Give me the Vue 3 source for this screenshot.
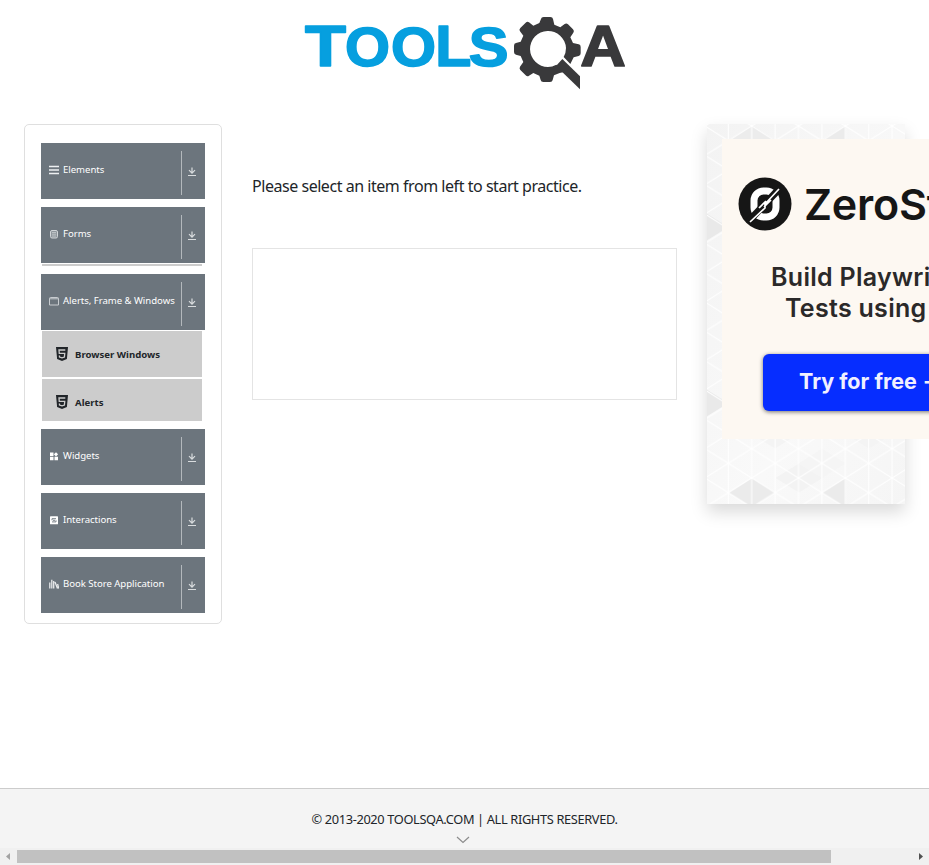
<script setup>
const groups = [
  { label: 'Elements', icon: 'menu' },
  { label: 'Forms', icon: 'form', strip: true },
  { label: 'Alerts, Frame & Windows', icon: 'window', children: ['Browser Windows', 'Alerts'] },
  { label: 'Widgets', icon: 'widgets' },
  { label: 'Interactions', icon: 'interact' },
  { label: 'Book Store Application', icon: 'books' }
]
const shades = [
  [45, 16, '#ececec'], [45, 368.7, '#ebebeb'], [-2, 103, '#e9e9e9'], [-2, 279, '#e9e9e9'],
  [92, 354, '#f3f3f3'], [115, 339.4, '#f5f5f5'], [68, 310, '#f4f4f4'], [162, 310, '#f4f4f4']
].map(([x, y, fill]) => ({ fill, points: `${x - 23.4},${y} ${x},${y - 14.6} ${x + 23.4},${y} ${x},${y + 14.6}` }))
</script>

<template>
  <div class="page">
    <header>
      <svg class="logo" viewBox="0 0 1020 270">
        <g class="tools">
          <text transform="translate(27 175) scale(1.17 .985)">T</text>
          <text transform="translate(147 175) scale(1.01 .97)">O</text>
          <text transform="translate(285 175) scale(1.01 .97)">O</text>
          <text transform="translate(418 175) scale(1.03 .985)">L</text>
          <text transform="translate(518 175) scale(1.04 .97)">S</text>
        </g>
        <g fill="#39393b">
          <path fill-rule="evenodd" d="M735 33q1-6 8-6h20q7 0 8 6l4 17 18 8 13-10q5-4 10 1l15 15q5 5 1 10l-9 14 8 17 17 4q6 1 6 8v19q0 7-6 8l-15 4-10 20-20-21q7-12 7-27a54 54 0 1 0-54 57q13 0 25-7l23 22-13 3-17 7-4 14q-1 6-8 6h-20q-7 0-8-6l-4-13-18-8-13 8q-5 4-10-1l-16-16q-4-5-1-10l10-14-8-18-14-4q-6-1-6-8v-19q0-7 6-8l14-4 8-18-10-13q-4-5 1-10l16-16q5-5 10-1l13 10 18-8Z" />
          <path d="m799 153 53 52v39l-72-70Z" />
          <text class="mark" transform="translate(853 175) scale(1.1 .985)">A</text>
        </g>
      </svg>
    </header>

    <main>
      <aside>
        <section v-for="g in groups" :key="g.label">
          <div class="group">
            <svg class="icon" viewBox="0 0 10 10">
              <path v-if="g.icon === 'menu'" d="M0 1.5h10M0 5h10M0 8.5h10" stroke="#edf0f2" stroke-width="1.7" />
              <g v-else-if="g.icon === 'form'" fill="#90979d" stroke="#d0d4d7">
                <rect x="1.5" y="1.5" width="7" height="7.5" rx="1.5" /><path d="M3 3.5h4M3 5.2h4M3 7h4" stroke-width=".7" />
              </g>
              <path v-else-if="g.icon === 'window'" d="M.5 2.5Q.5 1.5 1.5 1.5h7q1 0 1 1V9h-9ZM.5 2.8h9" fill="none" stroke="#c8ccd0" />
              <path v-else-if="g.icon === 'widgets'" d="M1 1.5h3.5V5H1zM7 1.2l2.1 2.1L7 5.4 4.9 3.3zM1 5.8h3.5v3.5H1zM5.5 5.8H9v3.5H5.5z" fill="#fff" />
              <g v-else-if="g.icon === 'interact'"><rect x="1" y="1.3" width="8" height="8" rx=".6" fill="#fff" /><path d="M3 5.3V3.7h4M7 5.3v1.6H3M4 5.3h2" stroke="#6c757d" stroke-width=".9" fill="none" /></g>
              <path v-else d="M.8 9.5v-6M2.8 9.5V.8M4.7 9.5V2M6 3l2.5 6.5M8.6 5l1.2 4.5" stroke="#e8eaec" stroke-width="1.3" />
            </svg>
            <span class="label">{{ g.label }}</span>
            <span class="toggle"><svg viewBox="0 0 8 9"><path d="M4 .5V6M1 3.2l3 3 3-3M0 8.5h8" /></svg></span>
          </div>
          <div v-if="g.strip" class="strip"></div>
          <ul v-if="g.children">
            <li v-for="c in g.children" :key="c">
              <svg viewBox="0 0 12 14"><path d="M0 0h12l-1.1 12L6 14l-4.9-2Z" fill="#212529" /><path d="M9.3 3H3l.25 3.4h5.5L8.4 10 6 10.8 3.5 10l-.1-1.5" fill="none" stroke="#ccc" stroke-width="1.3" /></svg>
              <span>{{ c }}</span>
            </li>
          </ul>
        </section>
      </aside>

      <div class="content">
        <p>Please select an item from left to start practice.</p>
        <div class="frame"></div>
      </div>

      <div class="promo">
        <svg class="backdrop" viewBox="0 0 198 380">
          <defs>
            <pattern id="mesh" width="46.8" height="29.33" patternUnits="userSpaceOnUse" x="-2.1" y="16.7">
              <path d="M0 0v29.33M23.4 0v29.33M46.8 0v29.33M0 14.67 23.4 0 46.8 14.67 23.4 29.33Z" />
            </pattern>
            <linearGradient id="tone" x2="1" y2="1"><stop stop-color="#f3f3f3" /><stop offset=".6" stop-color="#f9f9f9" /><stop offset="1" stop-color="#f5f5f5" /></linearGradient>
          </defs>
          <rect width="198" height="380" fill="url(#tone)" />
          <polygon v-for="(s, i) in shades" :key="i" :points="s.points" :fill="s.fill" />
          <path d="M115 368.7 138.6 354v29.4ZM115 16l23.6-14.6v29.2Z" fill="#ebebeb" />
          <rect width="198" height="380" fill="url(#mesh)" />
        </svg>
        <div class="ad">
          <div class="brand">
            <svg viewBox="0 0 54 54">
              <circle cx="27" cy="27" r="26.5" fill="#161616" />
              <rect x="16" y="14" width="22" height="26" rx="9.5" fill="none" stroke="#fff" stroke-width="7" />
              <path d="M10 45 42 11" stroke="#161616" stroke-width="7" />
              <path d="M12 45 27 31v-4L41 12M21 31l7-7M26 30l7-7" fill="none" stroke="#fff" stroke-width="1.7" />
            </svg>
            <span>ZeroSt</span>
          </div>
          <div class="pitch">Build Playwri</div>
          <div class="pitch second">Tests using</div>
          <div class="cta">Try for free →</div>
        </div>
      </div>
    </main>

    <footer>
      <span>© 2013-2020 TOOLSQA.COM | ALL RIGHTS RESERVED.</span>
      <svg viewBox="0 0 14 8"><path d="m1 1 6 5.5L13 1" /></svg>
    </footer>
    <div class="scrollbar">
      <svg viewBox="0 0 17 17"><path d="M10 5v7L6 8.5Z" fill="#a3a3a3" /></svg>
      <div class="thumb"></div>
      <svg viewBox="0 0 17 17"><path d="M7 5v7l4-3.5Z" fill="#505050" /></svg>
    </div>
  </div>
</template>

<style>
body { margin: 0; overflow: hidden; background: #fff; }
</style>

<style scoped>
* { box-sizing: border-box; }
.page { width: 929px; height: 865px; display: flex; flex-direction: column; overflow: hidden; font-family: "Noto Sans", "Open Sans", sans-serif; color: #212529; }
header { height: 124px; padding: 8px 0 0 296px; flex: none; }
.logo { display: block; width: 340px; height: 90px; }
.logo text { font: bold 172px "Liberation Sans", sans-serif; }
.tools { fill: #069fdf; stroke: #069fdf; stroke-width: 5; stroke-linejoin: round; }
.mark { stroke: #39393b; stroke-width: 5; stroke-linejoin: round; }
main { flex: 1; display: flex; align-items: flex-start; padding-left: 24px; min-height: 0; }
aside { width: 198px; height: 500px; flex: none; border: 1px solid #dfdfdf; border-radius: 5px; padding: 18px 16px; display: flex; flex-direction: column; gap: 8px; }
.group { width: 164px; height: 56px; background: #6c757d; color: #fff; display: flex; padding: 8px 9px 4px 8px; }
.icon { width: 10px; height: 10px; margin-top: 14px; flex: none; }
.label { margin-left: 4px; margin-top: 11px; font-size: 9.6px; line-height: 15px; white-space: nowrap; flex: 1; letter-spacing: -.04px; }
.toggle { width: 15px; height: 44px; flex: none; border-left: 1px solid #b3b8bc; padding: 16px 0 0 6px; }
.toggle svg { display: block; width: 8px; height: 9px; fill: none; stroke: #d9dcde; stroke-width: 1.2; }
.strip { width: 160px; height: 2px; background: #ccc; margin: 1px 0 0 1px; }
ul { list-style: none; margin: 0; padding: 1px 0 0 1px; display: flex; flex-direction: column; gap: 2px; }
li { width: 160px; height: 46px; background: #ccc; display: flex; align-items: center; gap: 7px; padding: 1px 0 0 14px; font-size: 9.6px; font-weight: 700; }
li:last-child { height: 42px; padding-top: 4px; }
li svg { width: 12px; height: 14px; margin-bottom: 2px; }
li:last-child svg { margin-bottom: 0; }
.content { width: 425px; margin-left: 30px; flex: none; }
p { margin: 50px 0 49px; font-size: 16px; line-height: 25px; white-space: nowrap; letter-spacing: -.46px; }
.frame { height: 152px; border: 1px solid #e4e4e4; }
.promo { position: relative; width: 198px; height: 380px; margin-left: 30px; padding: 15px; flex: none; box-shadow: 0 8px 16px rgba(0,0,0,.15); }
.backdrop { position: absolute; inset: 0; width: 198px; height: 380px; }
.backdrop pattern path { fill: none; stroke: #fff; stroke-width: 1; }
.ad { position: relative; width: 300px; height: 300px; background: #fdf8f2; font-family: Inter, sans-serif; font-weight: 600; color: #2b2929; white-space: nowrap; padding: 38px 0 0 16px; }
.brand { display: flex; align-items: center; gap: 12px; height: 54px; font-size: 43px; letter-spacing: -.2px; color: #161616; }
.brand svg { width: 54px; height: 54px; }
.pitch { font-size: 25px; line-height: 31px; font-weight: 600; letter-spacing: .3px; margin: 31px 0 0 33px; }
.second { margin: 0 0 0 47px; }
.cta { margin: 30px 0 0 25px; width: 220px; height: 57px; background: #062dff; border-radius: 6px; color: #f0f0ff; font-size: 21.5px; font-weight: 700; line-height: 54px; padding-left: 36px; box-shadow: 0 1px 4px rgba(0,0,0,.55); }
footer { height: 60px; flex: none; background: #f4f4f4; border-top: 1px solid #ccc; display: flex; flex-direction: column; align-items: center; padding-top: 20px; font-size: 12.8px; line-height: 20px; letter-spacing: -.35px; }
footer svg { width: 14px; height: 8px; margin: 7px 3px 0 0; fill: none; stroke: #8c8c8c; stroke-width: 1.2; }
.scrollbar { height: 17px; flex: none; display: flex; justify-content: space-between; align-items: center; background: #f0f0f0; }
.scrollbar svg { width: 17px; height: 17px; }
.thumb { width: 814px; height: 13px; background: #c1c1c1; margin-right: auto; }
</style>
